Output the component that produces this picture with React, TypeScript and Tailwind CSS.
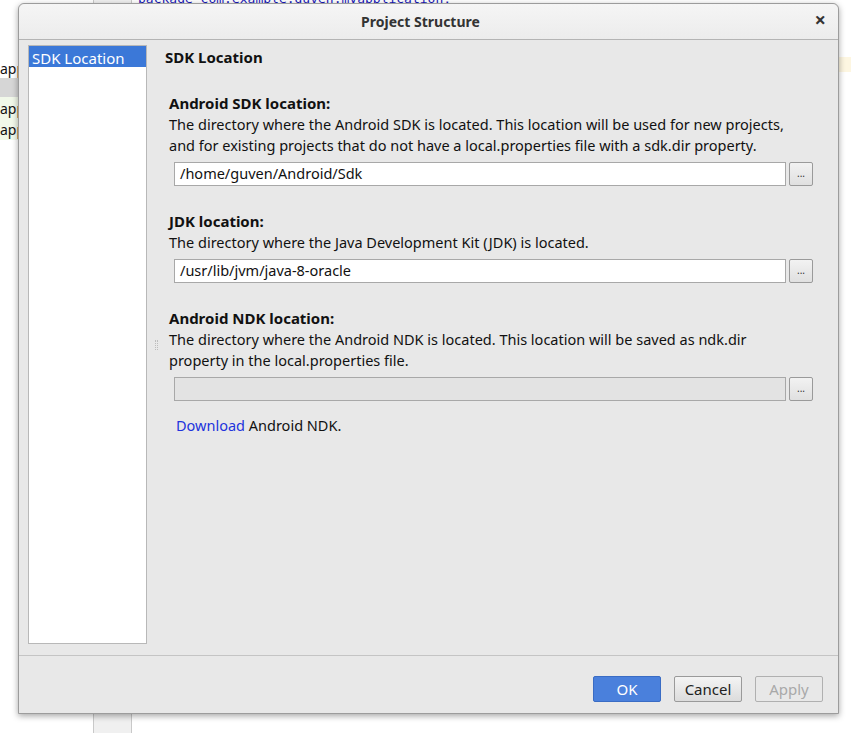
import React from "react";

const font = { fontFamily: '"Noto Sans", "Open Sans", sans-serif' };

function BrowseButton() {
  return (
    <div className="w-[24px] h-[24px] border border-[#9a9a9a] rounded-[2px] bg-gradient-to-b from-[#f2f2f2] to-[#e0e0e0] flex items-center justify-center text-[10px] text-[#333] leading-none pb-[3px]">
      ...
    </div>
  );
}

function PathField({ value, disabled }: { value?: string; disabled?: boolean }) {
  return (
    <div className="flex items-center gap-[3px] pl-[5px]">
      <div
        className={
          "flex-1 h-[24px] border border-[#a8a8a8] flex items-center pl-[5px] text-[14.5px] text-[#111] " +
          (disabled ? "bg-[#e3e3e3]" : "bg-white")
        }
      >
        {value}
      </div>
      <BrowseButton />
    </div>
  );
}

function Section({
  title,
  lines,
  value,
  disabled,
}: {
  title: string;
  lines: string[];
  value?: string;
  disabled?: boolean;
}) {
  return (
    <div className="flex flex-col">
      <div className="text-[15px] font-bold text-[#111] leading-[21px]">{title}</div>
      {lines.map((l) => (
        <div key={l} className="text-[14.5px] text-[#111] leading-[21px] whitespace-nowrap">
          {l}
        </div>
      ))}
      <div className="mt-[6px]">
        <PathField value={value} disabled={disabled} />
      </div>
    </div>
  );
}

export default function App() {
  return (
    <div className="relative w-[851px] h-[733px] bg-white overflow-hidden" style={font}>
      {/* Background IDE */}
      <div className="absolute inset-0 flex">
        <div className="w-[93px] flex flex-col pt-[60px] text-[14px] text-[#111]">
          <div className="h-[18px] leading-[18px]">app</div>
          <div className="h-[19px] bg-[#d6d6d6]" />
          <div className="h-[43px] bg-[#f1f8e9] flex flex-col">
            <div className="h-[21px] leading-[24px]">app</div>
            <div className="h-[21px] leading-[24px]">app</div>
          </div>
        </div>
        <div className="w-[39px] h-full bg-[#f0f0f0] border-x border-[#c9c9c9]" />
        <div className="flex-1 relative">
          <div
            className="absolute left-[6px] top-[-11px] text-[13px] text-[#1a1ab8] whitespace-nowrap"
            style={{ fontFamily: '"DejaVu Sans Mono", monospace' }}
          >
            package com.example.guven.myapplication;
          </div>
          <div className="absolute right-0 top-[57px] w-[14px] h-[15px] bg-[#fdf6e1]" />
        </div>
      </div>

      {/* Dialog */}
      <div className="absolute left-[18px] top-[3px] w-[821px] h-[711px] bg-[#e8e8e8] border border-[#9c9c9c] rounded-t-[6px] shadow-[0_2px_6px_rgba(0,0,0,0.35)] flex flex-col">
        <div className="h-[36px] shrink-0 rounded-t-[6px] bg-gradient-to-b from-[#f5f5f5] to-[#ececec] border-b border-[#b4b4b4] flex items-center justify-center relative pr-[16px]">
          <span className="text-[14px] font-bold text-[#333]">Project Structure</span>
          <span className="absolute right-[12px] top-[6px] text-[20px] font-bold text-[#333] leading-none">×</span>
        </div>

        <div className="flex-1 flex px-[9px] pt-[5px] pb-[11px] border-b border-[#c4c4c4]">
          <div className="w-[119px] bg-white border border-[#b8b8b8] flex flex-col">
            <div className="h-[21px] bg-[#3b78d8] text-white text-[15px] leading-[24px] pl-[3px] whitespace-nowrap overflow-hidden">
              SDK Location
            </div>
          </div>
          <div className="w-[18px] flex items-center justify-center">
            <div className="w-[3px] h-[10px] border-x border-dotted border-[#bdbdbd]" />
          </div>
          <div className="flex-1 pr-[16px] flex flex-col">
            <div className="text-[15px] font-bold text-[#111] leading-[21px] pt-[2px]">SDK Location</div>
            <div className="pl-[4px] mt-[25px] flex flex-col gap-[25px]">
              <Section
                title="Android SDK location:"
                lines={[
                  "The directory where the Android SDK is located. This location will be used for new projects,",
                  "and for existing projects that do not have a local.properties file with a sdk.dir property.",
                ]}
                value="/home/guven/Android/Sdk"
              />
              <Section
                title="JDK location:"
                lines={["The directory where the Java Development Kit (JDK) is located."]}
                value="/usr/lib/jvm/java-8-oracle"
              />
              <div className="flex flex-col">
                <Section
                  title="Android NDK location:"
                  lines={[
                    "The directory where the Android NDK is located. This location will be saved as ndk.dir",
                    "property in the local.properties file.",
                  ]}
                  disabled
                />
                <div className="pl-[7px] mt-[14px] text-[14.5px] text-[#111] leading-[21px]">
                  <span className="text-[#2233dd]">Download</span> Android NDK.
                </div>
              </div>
            </div>
          </div>
        </div>

        <div className="h-[57px] shrink-0 flex items-start justify-end gap-[13px] pt-[20px] pr-[15px]">
          <div className="w-[68px] h-[26px] rounded-[2px] bg-[#4a80dc] border border-[#3a6cc4] text-white text-[15px] flex items-center justify-center">
            OK
          </div>
          <div className="w-[68px] h-[26px] rounded-[2px] bg-gradient-to-b from-[#f4f4f4] to-[#dcdcdc] border border-[#9a9a9a] text-[#222] text-[15px] flex items-center justify-center">
            Cancel
          </div>
          <div className="w-[68px] h-[26px] rounded-[2px] bg-[#e8e8e8] border border-[#b0b0b0] text-[#a8a8a8] text-[15px] flex items-center justify-center">
            Apply
          </div>
        </div>
      </div>
    </div>
  );
}
